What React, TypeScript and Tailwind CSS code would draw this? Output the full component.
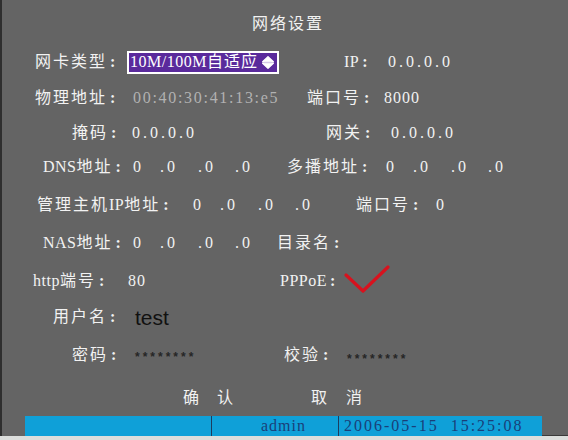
import React from "react";

const CJK = /[\u3000-\u9fff\uff00-\uffef]/;

function runs(text: string) {
  const out: { cjk: boolean; s: string }[] = [];
  for (const ch of text) {
    const c = CJK.test(ch);
    const last = out[out.length - 1];
    if (last && last.cjk === c) last.s += ch;
    else out.push({ cjk: c, s: ch });
  }
  return out;
}

function Label({ text }: { text: string }) {
  const body = text.endsWith(":") ? text.slice(0, -1) : text;
  return (
    <span className="whitespace-nowrap">
      {runs(body).map((r, i) => (
        <span key={i} className={r.cjk ? "tracking-[2px]" : "tracking-[0.5px]"}>
          {r.s}
        </span>
      ))}
      {text.endsWith(":") && <span className="ml-[3px] font-bold">:</span>}
    </span>
  );
}

function Ip() {
  return (
    <div className="flex whitespace-nowrap">
      <span className="w-[27px] shrink-0">0</span>
      <span className="w-[38px] shrink-0 tracking-[3px]">.0</span>
      <span className="w-[37px] shrink-0 tracking-[3px]">.0</span>
      <span className="tracking-[3px]">.0</span>
    </div>
  );
}

function Stars() {
  return (
    <span className="font-['Liberation_Sans',sans-serif] font-bold text-[12px] tracking-[3px] text-[#262626] pt-[4px]">
      ********
    </span>
  );
}

export default function App() {
  return (
    <div className="w-[568px] h-[440px] bg-[#dcdedc] overflow-hidden">
      <div className="w-[568px] h-[436px] bg-[#646464] shadow-[inset_2px_0_0_#2e2e2e] flex flex-col pt-[5px] text-[16px] leading-none text-[#f2f2f2] font-['Liberation_Serif','Noto_Sans_CJK_SC',serif]">
        {/* title */}
        <div className="h-[38px] shrink-0 flex items-center pl-[252px]">
          <span className="tracking-[2px]">网络设置</span>
        </div>

        {/* row 1 */}
        <div className="h-[38px] shrink-0 flex items-center">
          <div className="ml-[35px] w-[92px] shrink-0">
            <Label text="网卡类型:" />
          </div>
          <div className="w-[152px] h-[23px] shrink-0 border-2 border-white bg-[#5a2a9c] flex items-center pl-[1px]">
            <span className="whitespace-nowrap text-white">
              <span className="tracking-[0.5px]">10M/100M</span>
              <span className="tracking-[1px]">自适应</span>
            </span>
            <svg className="ml-auto mr-[3px]" width="12" height="13" viewBox="0 0 12 13">
              <polygon points="6,0.6 11.4,5.8 0.6,5.8" fill="#ffffff" stroke="#ffffff" strokeWidth="1.2" strokeLinejoin="round" />
              <polygon points="0.6,7.2 11.4,7.2 6,12.4" fill="#ffffff" stroke="#ffffff" strokeWidth="1.2" strokeLinejoin="round" />
            </svg>
          </div>
          <div className="ml-[65px] w-[44px] shrink-0">
            <Label text="IP:" />
          </div>
          <div className="tracking-[3px]">0.0.0.0</div>
        </div>

        {/* row 2 */}
        <div className="h-[33px] shrink-0 flex items-center">
          <div className="ml-[35px] w-[98px] shrink-0">
            <Label text="物理地址:" />
          </div>
          <div className="w-[174px] shrink-0 tracking-[1.7px] text-[#b2b2b2] whitespace-nowrap">00:40:30:41:13:e5</div>
          <div className="w-[77px] shrink-0">
            <Label text="端口号:" />
          </div>
          <div className="tracking-[1px]">8000</div>
        </div>

        {/* row 3 */}
        <div className="h-[38px] shrink-0 flex items-center">
          <div className="ml-[72px] w-[60px] shrink-0">
            <Label text="掩码:" />
          </div>
          <div className="w-[194px] shrink-0 tracking-[3px]">0.0.0.0</div>
          <div className="w-[65px] shrink-0">
            <Label text="网关:" />
          </div>
          <div className="tracking-[3px]">0.0.0.0</div>
        </div>

        {/* row 4 */}
        <div className="h-[30px] shrink-0 flex items-center">
          <div className="ml-[43px] w-[90px] shrink-0">
            <Label text="DNS地址:" />
          </div>
          <div className="w-[154px] shrink-0">
            <Ip />
          </div>
          <div className="w-[99px] shrink-0">
            <Label text="多播地址:" />
          </div>
          <Ip />
        </div>

        {/* row 5 */}
        <div className="h-[46px] shrink-0 flex items-center">
          <div className="ml-[37px] w-[156px] shrink-0">
            <Label text="管理主机IP地址:" />
          </div>
          <div className="w-[163px] shrink-0">
            <Ip />
          </div>
          <div className="w-[80px] shrink-0">
            <Label text="端口号:" />
          </div>
          <div>0</div>
        </div>

        {/* row 6 */}
        <div className="h-[30px] shrink-0 flex items-center">
          <div className="ml-[43px] w-[90px] shrink-0">
            <Label text="NAS地址:" />
          </div>
          <div className="w-[144px] shrink-0">
            <Ip />
          </div>
          <div>
            <Label text="目录名:" />
          </div>
        </div>

        {/* row 7 */}
        <div className="h-[46px] shrink-0 flex items-center">
          <div className="ml-[33px] w-[95px] shrink-0">
            <Label text="http端号:" />
          </div>
          <div className="w-[152px] shrink-0 tracking-[1px]">80</div>
          <div className="w-[64px] shrink-0">
            <Label text="PPPoE:" />
          </div>
          <svg width="46" height="32" viewBox="0 0 46 32">
            <polyline points="2,10 19,26 44,2" fill="none" stroke="#d8121e" strokeWidth="3.2" strokeLinecap="round" strokeLinejoin="round" />
          </svg>
        </div>

        {/* row 8 */}
        <div className="h-[26px] shrink-0 flex items-center">
          <div className="ml-[53px] w-[82px] shrink-0">
            <Label text="用户名:" />
          </div>
          <div className="font-['Liberation_Sans',sans-serif] text-[21px] text-[#111111]">test</div>
        </div>

        {/* row 9 */}
        <div className="h-[50px] shrink-0 flex items-center">
          <div className="ml-[72px] w-[63px] shrink-0">
            <Label text="密码:" />
          </div>
          <div className="w-[149px] shrink-0 flex">
            <Stars />
          </div>
          <div className="w-[63px] shrink-0">
            <Label text="校验:" />
          </div>
          <div className="flex pt-[4px]">
            <Stars />
          </div>
        </div>

        {/* row 10 */}
        <div className="h-[36px] shrink-0 flex items-center">
          <span className="ml-[183px] w-[34px] shrink-0">确</span>
          <span className="w-[94px] shrink-0">认</span>
          <span className="w-[35px] shrink-0">取</span>
          <span>消</span>
        </div>

        {/* status bar */}
        <div className="h-[20px] shrink-0 flex">
          <div className="ml-[25px] w-[187px] shrink-0 bg-[#0fa0d8] border-r border-[#1d3c5e]" />
          <div className="w-[127px] shrink-0 bg-[#0fa0d8] border-r border-[#1d3c5e] flex items-center pl-[49px] text-[#1a3f78] tracking-[1px]">
            admin
          </div>
          <div className="w-[203px] shrink-0 bg-[#0fa0d8] flex items-center pl-[5px] text-[#1a3f78] tracking-[2px] whitespace-pre">
            2006-05-15  15:25:08
          </div>
          <div className="flex-1 border-b border-[#3a3a3a]" />
        </div>
      </div>
    </div>
  );
}
